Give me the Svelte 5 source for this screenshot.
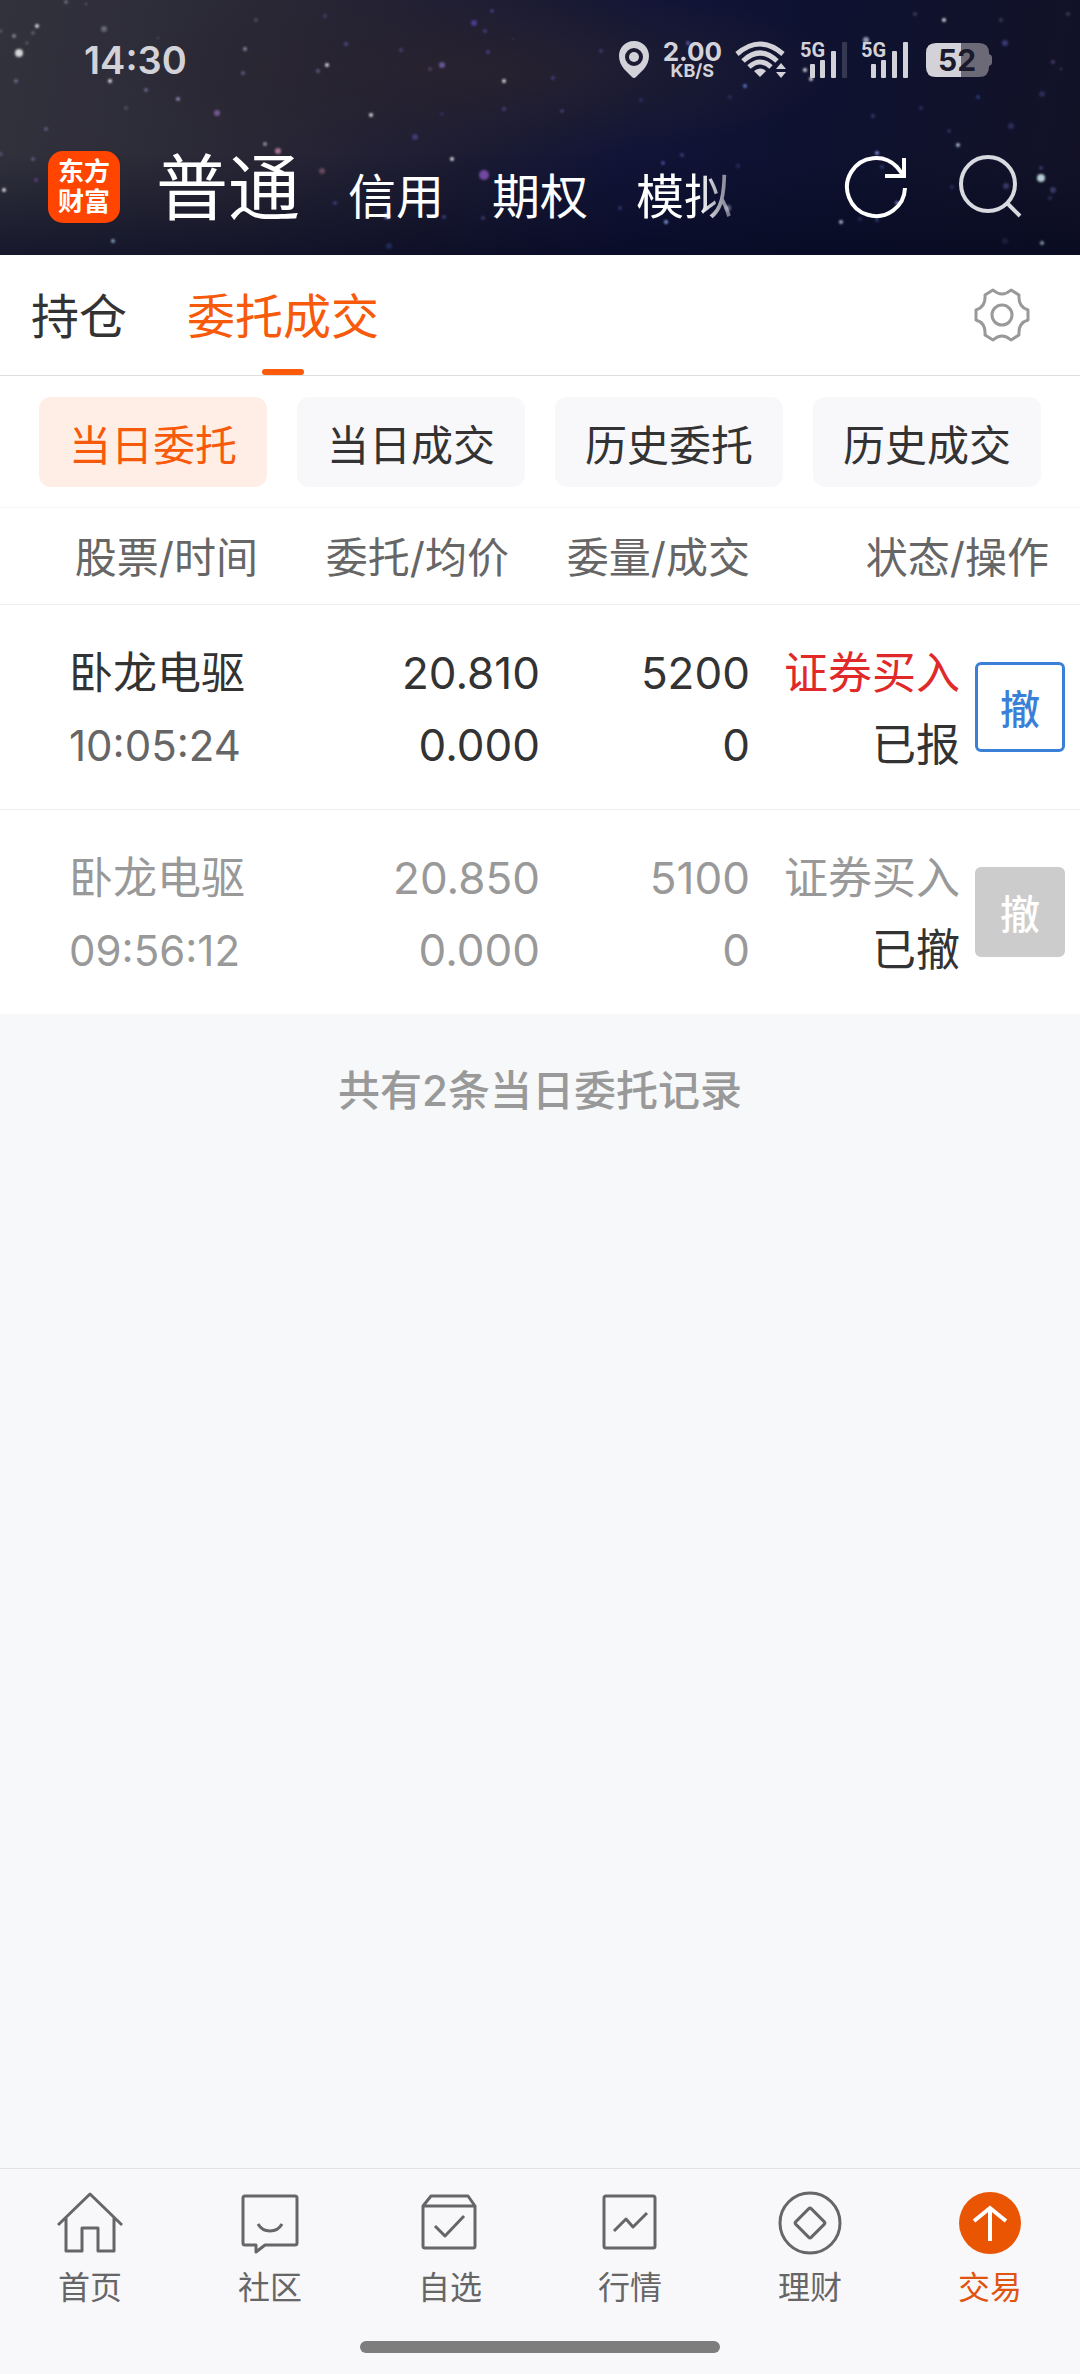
<script lang="ts">
    const accounts = ["信用", "期权", "模拟"];
    const filters = ["当日委托", "当日成交", "历史委托", "历史成交"];
    const navItems = ["首页", "社区", "自选", "行情", "理财", "交易"];

    const orders = [
        { name: "卧龙电驱", time: "10:05:24", price: "20.810", avg: "0.000", amount: 5200, filled: 0, side: "证券买入", status: "已报", canCancel: true },
        { name: "卧龙电驱", time: "09:56:12", price: "20.850", avg: "0.000", amount: 5100, filled: 0, side: "证券买入", status: "已撤", canCancel: false },
    ];

    let activeFilter = $state("当日委托");
    let activeNav = $state("交易");

    // x, y, radius, colour
    const stars: [number, number, number, string][] = [
        [19, 53, 4, "#fff"], [37, 26, 2, "#fff"], [14, 36, 2, "#99a"], [33, 33, 2, "#667"], [104, 29, 3, "#778"],
        [66, 2, 2, "#778"], [86, 4, 1, "#889"], [0, 31, 2, "#778"], [27, 43, 2, "#556"], [16, 81, 2, "#779"],
        [110, 81, 2, "#fff"], [146, 90, 2, "#779"], [178, 99, 2, "#a9c"], [126, 108, 2, "#556"], [217, 113, 3, "#86a"],
        [46, 129, 2, "#668"], [33, 159, 2, "#668"], [0, 154, 2, "#77a"], [4, 190, 2, "#fff"], [36, 180, 2, "#648"],
        [113, 241, 2, "#9bd"], [158, 38, 1, "#668"], [256, 20, 2, "#556"], [245, 49, 2, "#99b"], [243, 73, 2, "#668"],
        [325, 16, 2, "#447"], [346, 44, 2, "#559"], [327, 65, 2, "#fff"], [318, 71, 2, "#668"], [401, 50, 2, "#547"],
        [442, 65, 3, "#76a"], [430, 69, 2, "#546"], [474, 23, 3, "#54a"], [485, 31, 2, "#448"], [492, 11, 2, "#448"],
        [488, 52, 2, "#549"], [504, 81, 2, "#fff"], [504, 109, 2, "#548"], [513, 39, 1, "#446"], [371, 115, 2, "#fff"],
        [415, 137, 3, "#448"], [442, 114, 2, "#336"], [265, 144, 2, "#aab"], [278, 151, 3, "#c8a"], [322, 171, 3, "#756"],
        [452, 159, 2, "#fff"], [484, 175, 5, "#85b"], [387, 216, 3, "#9ae"], [335, 203, 2, "#448"], [444, 217, 2, "#448"],
        [483, 218, 2, "#447"], [389, 246, 3, "#236"], [601, 51, 2, "#447"], [553, 78, 2, "#448"], [562, 111, 2, "#447"],
        [688, 43, 2, "#66b"], [745, 86, 2, "#68d"], [730, 97, 2, "#336"], [641, 100, 2, "#336"], [682, 155, 2, "#448"],
        [663, 163, 2, "#55a"], [738, 166, 2, "#336"], [728, 208, 3, "#779"], [666, 222, 2, "#9bf"], [620, 208, 2, "#347"],
        [805, 70, 2, "#fff"], [811, 79, 2, "#fff"], [866, 40, 3, "#bbd"], [944, 20, 2, "#fff"], [915, 14, 2, "#446"],
        [1001, 20, 2, "#446"], [1005, 43, 3, "#448"], [1053, 62, 2, "#547"], [1061, 69, 1, "#668"], [1042, 94, 3, "#336"],
        [978, 97, 2, "#348"], [921, 108, 2, "#336"], [873, 116, 2, "#347"], [1011, 126, 3, "#336"], [949, 131, 2, "#336"],
        [958, 145, 2, "#cdf"], [877, 153, 2, "#9af"], [882, 167, 2, "#347"], [1041, 178, 4, "#dff"], [1041, 168, 2, "#447"],
        [1053, 190, 3, "#447"], [1050, 198, 2, "#336"], [952, 187, 2, "#336"], [1006, 186, 3, "#447"], [897, 203, 2, "#88e"],
        [841, 222, 2, "#cde"], [877, 220, 2, "#347"], [860, 219, 2, "#336"], [1042, 243, 2, "#abc"], [1005, 241, 3, "#224"],
        [1068, 14, 2, "#446"],
    ];
</script>

{#snippet signal(bars: number)}
    <svg class="signal" viewBox="0 0 48 38" aria-hidden="true">
        <text x="0" y="16">5G</text>
        <rect x="10" y="23" width="5" height="14" rx="1" />
        <rect x="20" y="19" width="5" height="18" rx="1" />
        <rect x="31" y="10" width="5" height="27" rx="1" />
        <rect x="42" y="1" width="5" height="36" rx="1" opacity={bars > 3 ? 1 : 0.2} />
    </svg>
{/snippet}

<div class="app">
    <header>
        <svg class="sky" viewBox="0 0 1080 255" preserveAspectRatio="xMidYMid slice" aria-hidden="true">
            {#each stars as [x, y, r, color]}
                <circle cx={x} cy={y} {r} fill={color} />
            {/each}
        </svg>

        <!-- Phone status bar -->
        <div class="status-bar">
            <span class="clock">14:30</span>
            <div class="status-icons">
                <svg class="pin" viewBox="0 0 32 38" aria-hidden="true">
                    <path fill-rule="evenodd" d="M16 0C7 0 1 7 1 15c0 5 2 9 5 13l8 8q2 2 4 0l8-8c3-4 5-8 5-13C31 7 25 0 16 0zM16 7a9 9 0 1 1 0 18a9 9 0 0 1 0-18z" />
                    <circle cx="16" cy="16" r="5" />
                </svg>
                <div class="speed">
                    <span class="rate">2.00</span>
                    <span class="unit">KB/S</span>
                </div>
                <svg class="wifi" viewBox="0 0 52 38" aria-hidden="true">
                    <g fill="none" stroke="#d3d2d9" stroke-width="5">
                        <path d="M2 13Q25 -7 48 13" />
                        <path d="M8 20Q25 4 42 20" />
                        <path d="M14 26Q25 16 36 26" />
                    </g>
                    <path d="M19 30Q25 25 31 30L25 36ZM41 28L46 22L51 28ZM41 31L46 37L51 31Z" />
                </svg>
                {@render signal(3)}
                {@render signal(4)}
                <svg class="battery" viewBox="0 0 66 34" aria-hidden="true">
                    <path fill="#6c6a76" d="M35 0H53Q63 0 63 10V11Q66 12 66 14V20Q66 22 63 23V24Q63 34 53 34H35Z" />
                    <path d="M10 0H35V34H10Q0 34 0 24V10Q0 0 10 0Z" />
                    <text x="31" y="28" text-anchor="middle">52</text>
                </svg>
            </div>
        </div>

        <div class="title-bar">
            <div class="logo">东方<br />财富</div>
            <nav class="accounts">
                <a class="current" href="#normal">普通</a>
                {#each accounts as account}
                    <a href="#{account}">{account}</a>
                {/each}
            </nav>
            <button class="icon-btn" aria-label="刷新">
                <svg viewBox="0 0 66 66" fill="none" stroke="#fff" stroke-width="4">
                    <path d="M62 34A29 29 0 1 1 54 13L61 22" />
                    <path d="M61 4V22H42" />
                </svg>
            </button>
            <button class="icon-btn" aria-label="搜索">
                <svg viewBox="0 0 66 66" fill="none" stroke="#d9d9e0" stroke-width="4">
                    <circle cx="31" cy="30" r="27" />
                    <path d="M50 49L63 62" />
                </svg>
            </button>
        </div>
    </header>

    <div class="tabs">
        <a href="#positions">持仓</a>
        <a class="active" href="#orders">委托成交</a>
        <button class="settings" aria-label="设置">
            <svg viewBox="-30 -30 60 60" fill="none" stroke="#999" stroke-width="3" stroke-linejoin="round">
                <path d="M-9 -25Q0 -17 9 -25L17 -20Q16 -8 26 -5V5Q16 8 17 20L9 25Q0 17 -9 25L-17 20Q-16 8 -26 5V-5Q-16 -8 -17 -20Z" />
                <circle r="10" />
            </svg>
        </button>
    </div>

    <div class="filters">
        {#each filters as filter}
            <button class:active={filter === activeFilter} onclick={() => (activeFilter = filter)}>{filter}</button>
        {/each}
    </div>

    <main>
        <table>
            <colgroup>
                <col class="col-wide" />
                <col class="col-wide" />
                <col />
                <col />
                <col class="col-action" />
            </colgroup>
            <thead>
                <tr>
                    <th>股票/时间</th>
                    <th>委托/均价</th>
                    <th>委量/成交</th>
                    <th colspan="2">状态/操作</th>
                </tr>
            </thead>
            <tbody>
                {#each orders as order}
                    <tr class:done={!order.canCancel}>
                        <td>{order.name}<br /><span class="time">{order.time}</span></td>
                        <td>{order.price}<br />{order.avg}</td>
                        <td>{order.amount}<br />{order.filled}</td>
                        <td><span class="side">{order.side}</span><br /><span class="state">{order.status}</span></td>
                        <td class="action"><button disabled={!order.canCancel}>撤</button></td>
                    </tr>
                {/each}
            </tbody>
        </table>
        <p class="summary">共有{orders.length}条当日委托记录</p>
    </main>

    <footer>
        <nav class="bottom-nav">
            {#each navItems as item, i}
                <a href="#{item}" class:active={item === activeNav} onclick={() => (activeNav = item)}>
                    <svg viewBox="-33 -33 66 66" fill="none" stroke="#666" stroke-width="3" stroke-linejoin="round" aria-hidden="true">
                        {#if i === 0}
                            <path d="M-32 2L0 -29L32 2M-24 -5V28H-8V5H8V28H24V-5" />
                        {:else if i === 1}
                            <path d="M-25 -27H25Q27 -27 27 -25V20Q27 22 25 22H-5L-14 29V22H-25Q-27 22 -27 20V-25Q-27 -27 -25 -27Z" />
                            <path d="M-12 1Q-8 8 0 8T12 1" />
                        {:else if i === 2}
                            <path d="M-27 -17L-19 -27H18L25 -17V23Q25 25 23 25H-25Q-27 25 -27 23ZM-27 -17H25" />
                            <path d="M-15 3L-5 13L14 -7" />
                        {:else if i === 3}
                            <rect x="-26" y="-27" width="51" height="52" rx="2" />
                            <path d="M-16 8L-4 -4L3 4L17 -10" />
                        {:else if i === 4}
                            <circle r="30" />
                            <rect x="-11" y="-11" width="22" height="22" rx="2" transform="rotate(45)" />
                        {:else}
                            <circle r="31" fill="#ea5504" stroke="none" />
                            <path d="M0 18V-15M-16 -2L0 -15L16 -2" stroke="#fff" stroke-width="4" stroke-linejoin="miter" />
                        {/if}
                    </svg>
                    <span>{item}</span>
                </a>
            {/each}
        </nav>
        <div class="home-indicator"></div>
    </footer>
</div>

<style>
    :global(body) {
        margin: 0;
        background: #f7f8fa;
    }

    .app {
        display: flex;
        flex-direction: column;
        min-height: 100vh;
        font-family: Inter, "Noto Sans CJK SC", sans-serif;
        color: #333;
    }

    a {
        color: inherit;
        text-decoration: none;
    }

    button {
        padding: 0;
        border: none;
        background: none;
        font-family: inherit;
        color: inherit;
        cursor: pointer;
    }

    svg {
        display: block;
    }

    /* Night sky header */
    header {
        position: relative;
        height: 255px;
        overflow: hidden;
        background:
            linear-gradient(180deg, transparent 60%, rgba(5, 8, 32, 0.6)),
            radial-gradient(ellipse 360px 90px at 480px 70px, rgba(42, 36, 46, 0.8), transparent),
            linear-gradient(100deg, #32323d 0%, #292735 25%, #1d1c33 42%, #111437 58%, #0e1230 75%, #131226 100%);
    }

    .sky {
        position: absolute;
        inset: 0;
        width: 100%;
        height: 100%;
        opacity: 0.8;
        filter: blur(1px);
    }

    .status-bar,
    .title-bar {
        position: relative;
        display: flex;
        align-items: center;
    }

    .status-bar {
        justify-content: space-between;
        padding: 36px 88px 0 84px;
        height: 48px;
        color: #d3d2d9;
    }

    .status-bar svg {
        overflow: visible;
        fill: #d3d2d9;
    }

    .clock {
        font-size: 38px;
        font-weight: 600;
    }

    .status-icons {
        display: flex;
        align-items: center;
        gap: 13px;
    }

    .pin {
        width: 32px;
        height: 38px;
    }

    .speed {
        display: flex;
        flex-direction: column;
        align-items: center;
        font-weight: 700;
    }

    .rate {
        font-size: 26px;
        line-height: 22px;
    }

    .unit {
        font-size: 18px;
        line-height: 16px;
    }

    .wifi {
        width: 52px;
        height: 38px;
    }

    .signal {
        width: 48px;
        height: 38px;
    }

    .signal text {
        font-family: "Liberation Sans Narrow", Roboto, sans-serif;
        font-size: 20px;
        font-weight: 700;
    }

    .battery {
        width: 66px;
        height: 34px;
        margin-left: 4px;
    }

    .battery text {
        fill: #1b1a2c;
        font-size: 30px;
        font-weight: 700;
    }

    .title-bar {
        padding: 56px 57px 0 48px;
    }

    .logo {
        display: flex;
        align-items: center;
        justify-content: center;
        width: 72px;
        height: 72px;
        border-radius: 15px;
        background: #ff4500;
        color: #fff;
        font-size: 26px;
        font-weight: 700;
        line-height: 30px;
    }

    .accounts {
        display: flex;
        flex: 1;
        align-items: baseline;
        gap: 48px;
        margin-left: 36px;
        padding-top: 12px;
        color: #fff;
        font-size: 48px;
        line-height: 72px;
    }

    .accounts .current {
        font-size: 72px;
    }

    .accounts a:last-child {
        mask-image: linear-gradient(90deg, #000 65%, rgba(0, 0, 0, 0.4));
    }

    .icon-btn {
        margin-left: 48px;
    }

    .icon-btn svg {
        width: 66px;
        height: 66px;
    }

    /* Tabs */
    .tabs {
        display: flex;
        align-items: stretch;
        gap: 60px;
        height: 120px;
        padding: 0 48px 0 31px;
        border-bottom: 1px solid #ddd;
        background: #fff;
        font-size: 48px;
        line-height: 124px;
    }

    .tabs .active {
        position: relative;
        color: #f75a0a;
    }

    .tabs .active::after {
        content: "";
        position: absolute;
        bottom: 0;
        left: 50%;
        width: 42px;
        height: 6px;
        margin-left: -21px;
        border-radius: 3px;
        background: #fa5a0a;
    }

    .settings {
        margin-left: auto;
    }

    .settings svg {
        width: 60px;
        height: 60px;
    }

    .filters {
        display: grid;
        grid-template-columns: repeat(4, 1fr);
        gap: 30px;
        padding: 21px 39px 20px;
        border-bottom: 1px solid #f6f6f6;
        background: #fff;
    }

    .filters button {
        height: 90px;
        border-radius: 12px;
        background: #f8f8fb;
        font-size: 42px;
    }

    .filters .active {
        background: #ffeee6;
        color: #f75a0a;
    }

    /* Orders */
    main {
        flex: 1;
    }

    table {
        width: 100%;
        table-layout: fixed;
        border-collapse: separate;
        border-spacing: 0;
        background: #fff;
        text-align: right;
    }

    .col-wide {
        width: 25%;
    }

    .col-action {
        width: 120px;
    }

    th {
        height: 92px;
        padding: 4px 31px 0 0;
        border-bottom: 1px solid #eee;
        color: #666;
        font-size: 42px;
        font-weight: 400;
        line-height: 60px;
        text-align: right;
    }

    th:first-child {
        padding-right: 12px;
    }

    th:nth-child(3) {
        padding-right: 0;
    }

    td {
        height: 200px;
        padding: 4px 0 0;
        font-size: 44px;
        line-height: 72px;
        white-space: nowrap;
    }

    tr:not(:last-child) td {
        border-bottom: 1px solid #eee;
    }

    td:first-child {
        padding-left: 69px;
        text-align: left;
    }

    .time {
        color: #666;
        font-size: 42px;
    }

    .side {
        color: #e02a2a;
    }

    .done,
    .done .time,
    .done .side {
        color: #999;
    }

    .done .state {
        color: #333;
    }

    td.action {
        height: 204px;
        padding-top: 0;
    }

    .action button {
        width: 90px;
        height: 90px;
        margin-right: 15px;
        border: 3px solid #3b80d8;
        border-radius: 6px;
        color: #3b80d8;
        font-size: 40px;
        font-weight: 500;
        vertical-align: middle;
    }

    .action button:disabled {
        border-color: #ccc;
        background: #ccc;
        color: #fff;
    }

    .summary {
        margin: 46px 0;
        color: #999;
        font-size: 42px;
        font-weight: 500;
        line-height: 62px;
        text-align: center;
    }

    /* Bottom navigation */
    footer {
        padding: 21px 0;
        border-top: 1px solid #e2e3e6;
        background: #f8f8fb;
    }

    .bottom-nav {
        display: grid;
        grid-template-columns: repeat(6, 1fr);
    }

    .bottom-nav a {
        display: flex;
        flex-direction: column;
        align-items: center;
        gap: 12px;
        color: #666;
        font-size: 32px;
        line-height: 40px;
    }

    .bottom-nav svg {
        width: 66px;
        height: 66px;
    }

    .bottom-nav .active {
        color: #df5410;
    }

    .home-indicator {
        width: 33.33%;
        height: 12px;
        margin: 33px auto 0;
        border-radius: 6px;
        background: #7d7d7d;
    }
</style>
